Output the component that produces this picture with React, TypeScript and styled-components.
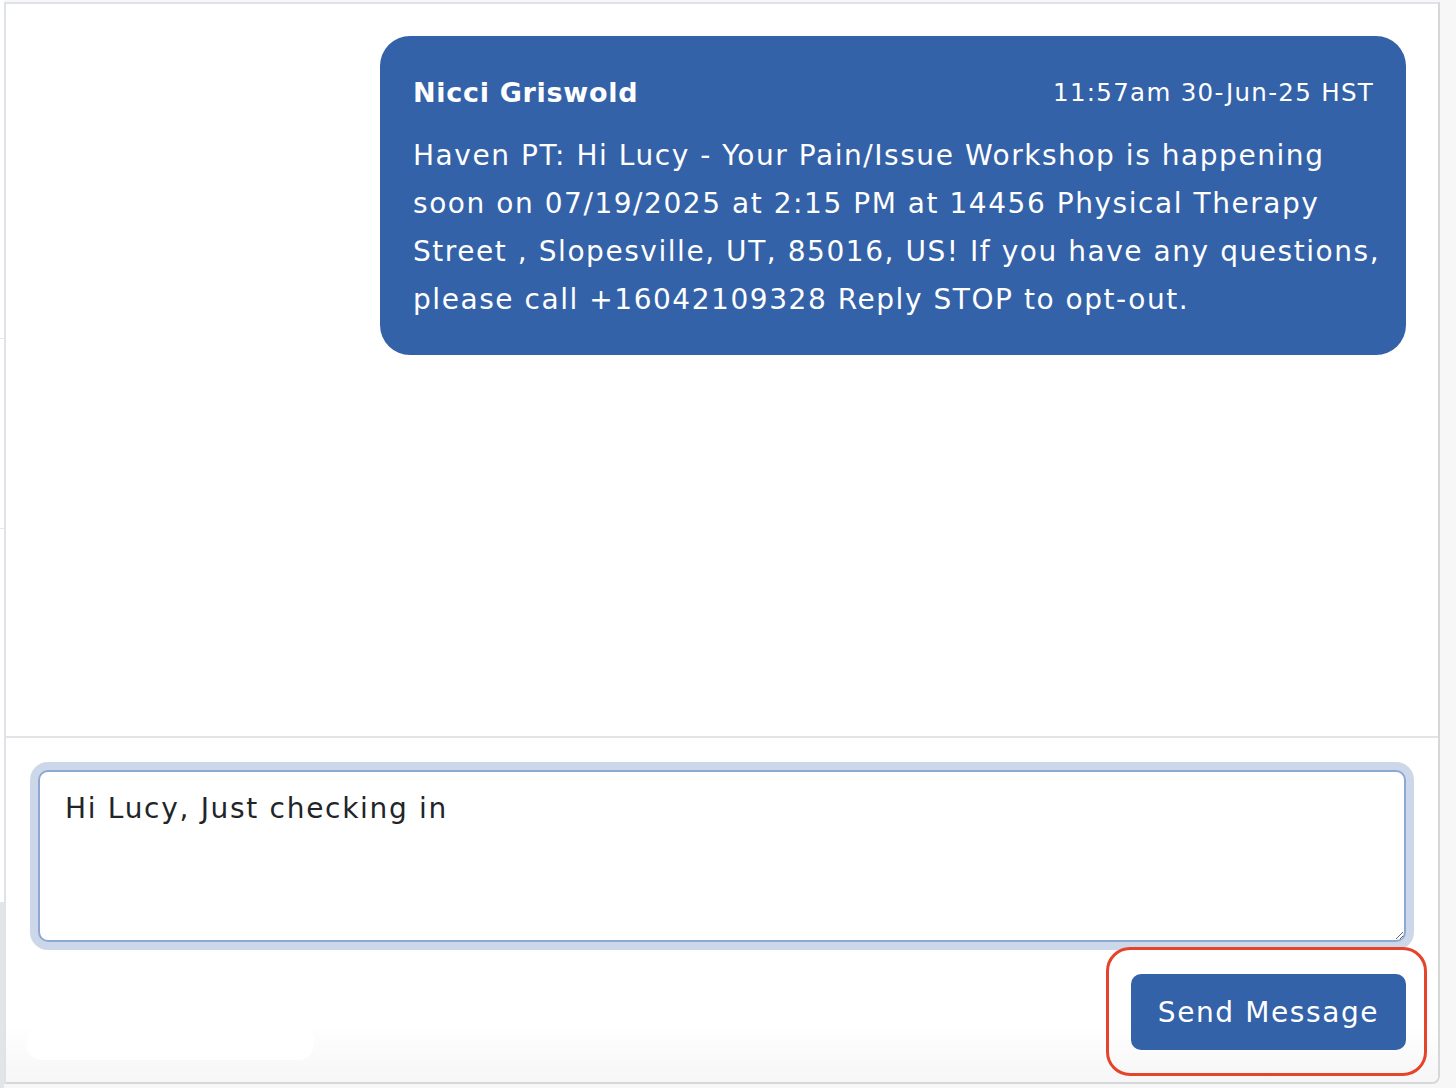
import React, { useEffect, useRef } from "react";
import styled, { createGlobalStyle } from "styled-components";

const FONT = `"DejaVu Sans", "Open Sans", "Liberation Sans", sans-serif`;

const Global = createGlobalStyle`
  html, body { margin: 0; padding: 0; }
  body {
    background: #f7f7f8;
    font-family: ${FONT};
    width: 1456px;
    height: 1088px;
    overflow: hidden;
  }
`;

const Page = styled.div`
  display: flex;
  width: 1456px;
  height: 1088px;
`;

const SideStrip = styled.div`
  width: 4px;
  display: flex;
  flex-direction: column;
  background: #ffffff;
`;

const StripPart = styled.div<{ $h: number; $grey?: boolean }>`
  height: ${(p) => p.$h}px;
  flex: ${(p) => (p.$h === 0 ? 1 : "none")};
  background: ${(p) => (p.$grey ? "#e3e4e6" : "#ffffff")};
  border-bottom: ${(p) => (p.$grey ? "none" : "1px solid #e4e6ea")};
`;

const Panel = styled.div`
  margin-top: 2px;
  width: 1436px;
  height: 1082px;
  box-sizing: border-box;
  background: #ffffff;
  border-top: 2px solid #dfe2e7;
  border-left: 2px solid #dfe2e7;
  border-right: 2px solid #d6d7d9;
  border-bottom: 2px solid #d6d7d9;
  border-bottom-right-radius: 8px;
  display: flex;
  flex-direction: column;
  overflow: hidden;
`;

const Messages = styled.div`
  height: 734px;
  box-sizing: border-box;
  padding: 32px 32px 0 32px;
  display: flex;
  flex-direction: column;
  align-items: flex-end;
  border-bottom: 2px solid #e2e4e8;
`;

const Bubble = styled.div`
  width: 1026px;
  box-sizing: border-box;
  background: #3462a9;
  color: #ffffff;
  border-radius: 30px;
  padding: 32px 33px 31px 33px;
`;

const BubbleHead = styled.div`
  display: flex;
  justify-content: space-between;
  align-items: center;
  height: 48px;
  margin-bottom: 16px;
`;

const Sender = styled.span`
  font-size: 27px;
  font-weight: 700;
  letter-spacing: 0.7px;
`;

const Stamp = styled.span`
  font-size: 24.5px;
  font-weight: 400;
  letter-spacing: 1.3px;
  margin-right: -1px;
`;

const Body = styled.div`
  font-size: 28px;
  line-height: 48px;
  letter-spacing: 1.55px;
  margin-right: -8px;
`;

const Composer = styled.div`
  position: relative;
  flex: 1;
  padding: 32px 32px 30px 32px;
  display: flex;
  flex-direction: column;
  align-items: stretch;
  background: linear-gradient(
    to bottom,
    #ffffff 0,
    #ffffff calc(100% - 58px),
    #f6f6f7 100%
  );
`;

const Input = styled.textarea`
  display: block;
  box-sizing: border-box;
  width: 100%;
  height: 172px;
  margin: 0;
  padding: 16px 25px;
  border: 2px solid #8ea8d4;
  border-radius: 10px;
  box-shadow: 0 0 0 8px rgba(52, 98, 169, 0.25);
  outline: none;
  font-family: ${FONT};
  font-size: 28px;
  line-height: 42px;
  letter-spacing: 1.7px;
  color: #212529;
  caret-color: #212529;
  background: #ffffff;
  resize: vertical;
`;

const Actions = styled.div`
  display: flex;
  justify-content: flex-end;
  margin-top: 32px;
`;

const SendButton = styled.button`
  position: relative;
  width: 275px;
  height: 76px;
  padding: 0;
  border: none;
  border-radius: 10px;
  background: #3462a9;
  color: #ffffff;
  font-family: ${FONT};
  font-size: 28px;
  font-weight: 400;
  letter-spacing: 1.6px;
  cursor: pointer;
`;

const Highlight = styled.span`
  position: absolute;
  left: -25px;
  top: -27px;
  right: -21px;
  bottom: -26px;
  border: 3px solid #e6432b;
  border-radius: 24px;
  pointer-events: none;
`;

const Ghost = styled.div`
  position: absolute;
  left: 20px;
  bottom: 22px;
  width: 288px;
  height: 34px;
  border-radius: 16px;
  background: #ffffff;
  pointer-events: none;
`;

export default function App() {
  const ref = useRef<HTMLTextAreaElement>(null);
  useEffect(() => {
    const el = ref.current;
    if (el) {
      el.focus();
      const n = el.value.length;
      el.setSelectionRange(n, n);
    }
  }, []);
  return (
    <>
      <Global />
      <Page>
        <SideStrip>
          <StripPart $h={338} />
          <StripPart $h={189} />
          <StripPart $h={373} />
          <StripPart $h={0} $grey />
        </SideStrip>
        <Panel>
          <Messages>
            <Bubble>
              <BubbleHead>
                <Sender>Nicci Griswold</Sender>
                <Stamp>11:57am 30-Jun-25 HST</Stamp>
              </BubbleHead>
              <Body>
                Haven PT: Hi Lucy - Your Pain/Issue Workshop is happening soon on
                07/19/2025 at 2:15 PM at 14456 Physical Therapy Street ,
                Slopesville, UT, 85016, US! If you have any questions, please call
                +16042109328 Reply STOP to opt-out.
              </Body>
            </Bubble>
          </Messages>
          <Composer>
            <Ghost />
            <Input ref={ref} defaultValue="Hi Lucy, Just checking in" />
            <Actions>
              <SendButton type="button">
                Send Message
                <Highlight />
              </SendButton>
            </Actions>
          </Composer>
        </Panel>
      </Page>
    </>
  );
}
